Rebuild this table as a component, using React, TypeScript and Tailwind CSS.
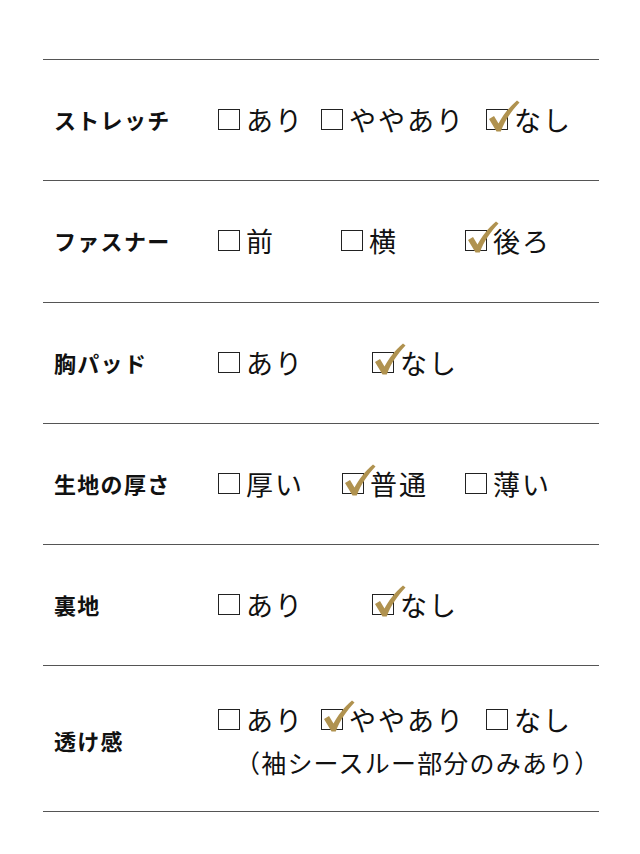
const FONT = "font-['Noto_Sans_CJK_JP','Noto_Sans',sans-serif]";

type Opt = { label: string; checked?: boolean; w: string };

type Row = { title: string; h: string; options: Opt[]; note?: string };

const ROWS: Row[] = [
  {
    title: "ストレッチ",
    h: "h-[121px]",
    options: [
      { label: "あり", w: "w-[103px]" },
      { label: "ややあり", w: "w-[165px]" },
      { label: "なし", checked: true, w: "w-[100px]" },
    ],
  },
  {
    title: "ファスナー",
    h: "h-[122px]",
    options: [
      { label: "前", w: "w-[123px]" },
      { label: "横", w: "w-[124px]" },
      { label: "後ろ", checked: true, w: "w-[110px]" },
    ],
  },
  {
    title: "胸パッド",
    h: "h-[121px]",
    options: [
      { label: "あり", w: "w-[154px]" },
      { label: "なし", checked: true, w: "w-[110px]" },
    ],
  },
  {
    title: "生地の厚さ",
    h: "h-[121px]",
    options: [
      { label: "厚い", w: "w-[124px]" },
      { label: "普通", checked: true, w: "w-[123px]" },
      { label: "薄い", w: "w-[110px]" },
    ],
  },
  {
    title: "裏地",
    h: "h-[121px]",
    options: [
      { label: "あり", w: "w-[154px]" },
      { label: "なし", checked: true, w: "w-[110px]" },
    ],
  },
  {
    title: "透け感",
    h: "h-[147px]",
    options: [
      { label: "あり", w: "w-[103px]" },
      { label: "ややあり", checked: true, w: "w-[165px]" },
      { label: "なし", w: "w-[100px]" },
    ],
    note: "（袖シースルー部分のみあり）",
  },
];

function Box({ checked }: { checked?: boolean }) {
  return (
    <span className="relative inline-block h-[21px] w-[22px] shrink-0 border border-[#222]">
      {checked && (
        <svg
          viewBox="0 0 34 34"
          className="absolute -left-[1px] -top-[10px] h-[34px] w-[34px]"
        >
          <path
            d="M3 19 L8 16 L12.5 23.5 C17 15 22.5 8 31 0.5 L33.5 2.5 C25.5 11 19 20 14.8 31.5 L10.5 31.5 Z"
            fill="#b0924f"
          />
        </svg>
      )}
    </span>
  );
}

function Option({ opt }: { opt: Opt }) {
  return (
    <div className={`flex shrink-0 items-center gap-[6px] ${opt.w}`}>
      <Box checked={opt.checked} />
      <span className="whitespace-nowrap text-[27px] leading-none tracking-[2px] text-[#111]">
        {opt.label}
      </span>
    </div>
  );
}

export default function App() {
  return (
    <div className={`min-h-[854px] w-[640px] bg-white ${FONT}`}>
      <div className="ml-[43px] w-[556px] pt-[59px]">
        {ROWS.map((row, i) => (
          <div
            key={row.title}
            className={`flex items-center border-t-[1.5px] border-[#555] pb-[2px] ${row.h} ${
              i === ROWS.length - 1 ? "border-b-[1.5px] pt-[6px]" : ""
            }`}
          >
            <div className="w-[175px] shrink-0 pl-[11px] text-[22px] font-bold tracking-[1.3px] text-[#111]">
              {row.title}
            </div>
            <div className="flex flex-col">
              <div className="flex items-center">
                {row.options.map((o) => (
                  <Option key={o.label} opt={o} />
                ))}
              </div>
              {row.note && (
                <div className="mt-[17px] pl-[17px] whitespace-nowrap text-[25px] leading-none tracking-[1.2px] text-[#111]">
                  {row.note}
                </div>
              )}
            </div>
          </div>
        ))}
      </div>
    </div>
  );
}
